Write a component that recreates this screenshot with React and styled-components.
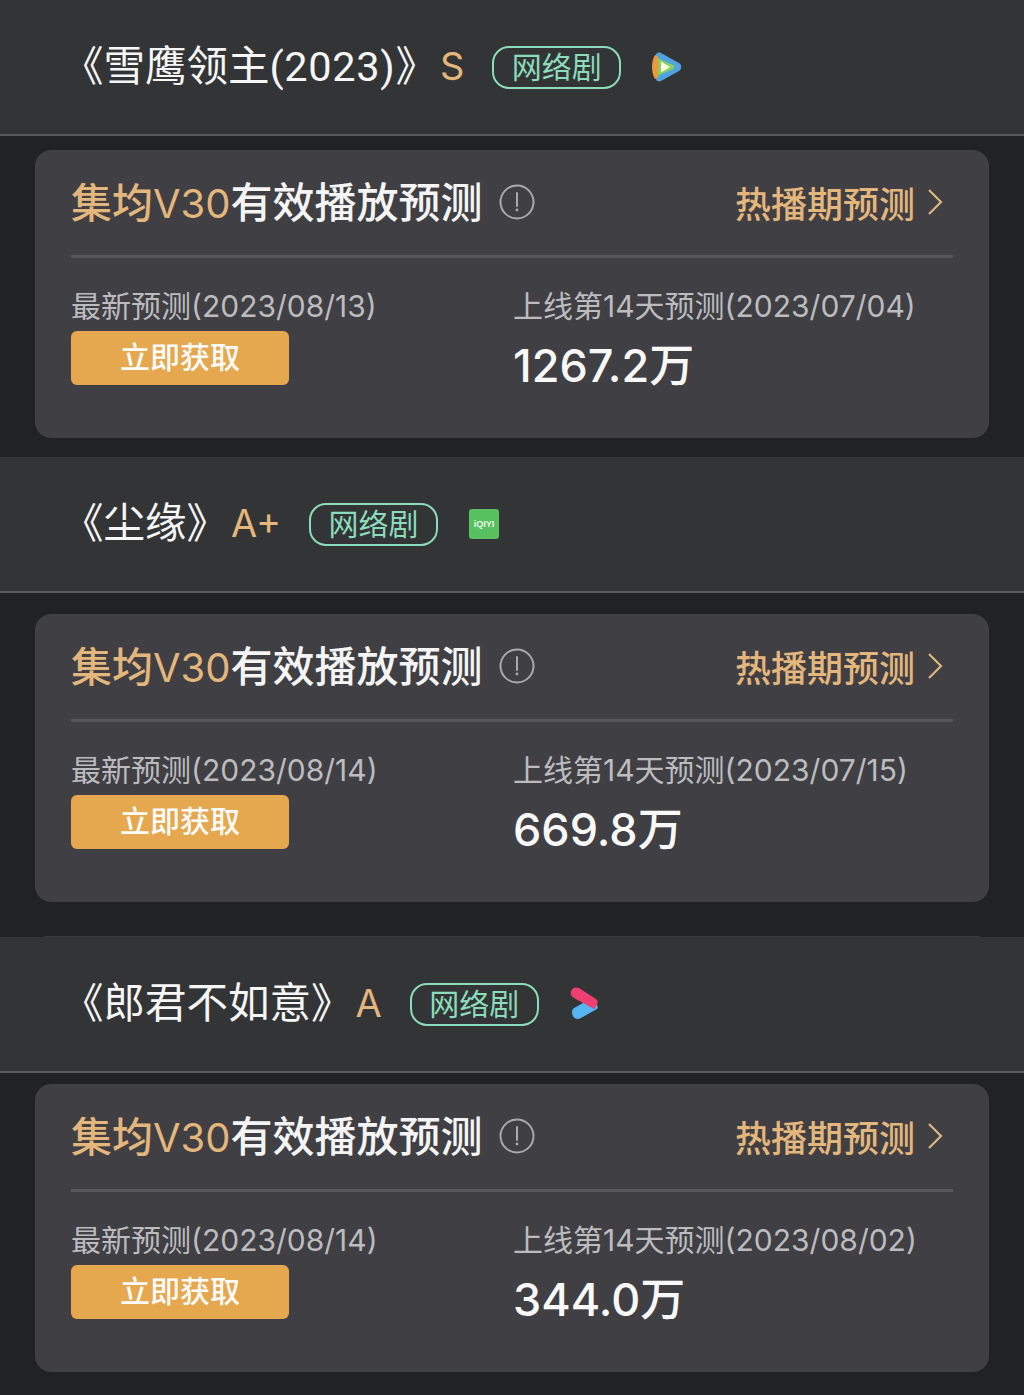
import React from "react";
import styled, { createGlobalStyle } from "styled-components";

const Global = createGlobalStyle`
  html, body { margin: 0; padding: 0; background: #212225; }
  body { font-family: "Inter", "Noto Sans CJK SC", sans-serif; }
`;

const Page = styled.div`
  width: 1024px;
  height: 1395px;
  overflow: hidden;
  background: #212225;
  display: flex;
  flex-direction: column;
`;

const Header = styled.header`
  height: 134px;
  box-sizing: content-box;
  background: #333436;
  border-bottom: 2px solid #58595c;
  display: flex;
  align-items: center;
  padding-left: 62px;
  flex: none;
`;

const Title = styled.h2`
  margin: 0;
  font: 400 41.5px/1 "Roboto", "Noto Sans CJK SC", sans-serif;
  color: #f6f6f6;
  white-space: nowrap;
`;

const TitleYear = styled.span`
  letter-spacing: 0.65px;
`;

const Grade = styled.span`
  margin-left: 3px;
  padding-bottom: 3px;
  font: 400 38px/1 "Inter", sans-serif;
  color: #e3b67c;
`;

const Tag = styled.span`
  margin-left: 28px;
  width: 129px;
  height: 43px;
  box-sizing: border-box;
  border: 2px solid #8adcba;
  border-radius: 17px;
  padding-bottom: 4px;
  display: flex;
  align-items: center;
  justify-content: center;
  font: 400 30px/1 "Noto Sans CJK SC", sans-serif;
  color: #8adcba;
`;

const PlatformIcon = styled.span`
  margin-left: ${(p) => p.$gap}px;
  display: flex;
`;

const Card = styled.section`
  margin: ${(p) => p.$top}px 35px 0;
  height: 288px;
  flex: none;
  box-sizing: border-box;
  background: #3f3f44;
  border-radius: 16px;
  padding: 0 36px;
  display: flex;
  flex-direction: column;
`;

const CardHead = styled.div`
  height: 108px;
  flex: none;
  border-bottom: 3px solid #57575c;
  display: flex;
  align-items: center;
  padding-bottom: 2px;
  box-sizing: border-box;
`;

const CardTitle = styled.h3`
  margin: 0;
  font: 500 42px/1 "Noto Sans CJK SC", sans-serif;
  color: #f4f4f4;
  white-space: nowrap;
`;

const Gold = styled.span`
  color: #e3b67c;
  font-size: 41px;
  font-weight: 500;
`;

const Latin = styled.span`
  font-family: "Inter", sans-serif;
  font-weight: 400;
  font-size: 40px;
`;

const Info = styled.span`
  margin-left: 16px;
  display: flex;
`;

const HotLink = styled.a`
  margin-left: auto;
  padding-right: 10px;
  display: flex;
  align-items: center;
  gap: 12px;
  font: 500 36px/1 "Noto Sans CJK SC", sans-serif;
  color: #e3b67c;
  white-space: nowrap;
`;

const Body = styled.div`
  display: grid;
  grid-template-columns: 442px 1fr;
  padding-top: 31px;
`;

const Column = styled.div`
  display: flex;
  flex-direction: column;
  align-items: flex-start;
`;

const Label = styled.div`
  font: 400 30px/34px "Inter", "Noto Sans CJK SC", sans-serif;
  color: #bcbcbf;
  white-space: nowrap;
`;

const GetButton = styled.button`
  margin-top: 8px;
  width: 218px;
  height: 54px;
  padding: 0 0 7px;
  border: 0;
  border-radius: 6px;
  background: #e6a84e;
  color: #fbfbfb;
  font: 500 30px/1 "Noto Sans CJK SC", sans-serif;
`;

const Value = styled.div`
  margin-top: 18px;
  font: 500 45px/1.1 "Inter", "Noto Sans CJK SC", sans-serif;
  color: #f8f8f8;
`;

const InfoIcon = () => (
  <svg width="36" height="36" viewBox="0 0 36 36" fill="none">
    <circle cx="18" cy="18" r="16.5" stroke="#a9a9ad" strokeWidth="2" />
    <path d="M18 9v13" stroke="#a9a9ad" strokeWidth="2" strokeLinecap="round" />
    <circle cx="18" cy="26" r="1.4" fill="#a9a9ad" />
  </svg>
);

const Chevron = () => (
  <svg width="16" height="28" viewBox="0 0 16 28" fill="none">
    <path d="M2 2l12 12L2 26" stroke="#dfb680" strokeWidth="2.2" />
  </svg>
);

const TencentIcon = () => (
  <svg width="33" height="30" viewBox="0 0 33 30">
    <path d="M7 2c1-1 3-2 5-1l18 10c3 2 3 6 0 8L12 29c-2 1-4 0-5-1 3-8 3-18 0-26z" fill="#4ea4e0" />
    <path d="M6 3C2 9 2 21 6 27c2 0 3-1 3-2 2-6 2-14 0-20 0-1-1-2-3-2z" fill="#ea9a3d" />
    <path d="M8 6l16 7c2 1 2 3 0 4L8 24c2-6 2-12 0-18z" fill="#8ed15a" />
    <path d="M12 9.500l9 5.500-9 5.500z" fill="#f7fae8" />
  </svg>
);

const IqiyiLogo = styled.span`
  width: 30px;
  height: 30px;
  border-radius: 3px;
  background: #57c15f;
  color: #e8f8e8;
  font: 700 9px/30px "Liberation Sans", sans-serif;
  text-align: center;
  letter-spacing: 0;
`;

const YoukuIcon = () => (
  <svg width="30" height="34" viewBox="0 0 30 34">
    <path d="M3 25c0-3 2-4 4-5l12-7 9 5c1 1 1 3 0 4L12 31c-5 3-9-1-9-6z" fill="#55b5f2" />
    <path d="M2 4C4 0 7 0 10 1l17 11c2 1 2 4 1 6l-3 4L5 11C2 9 1 7 2 4z" fill="#ee3f72" />
  </svg>
);

const items = [
  {
    id: "xueying",
    name: <>《雪鹰领主<TitleYear>(2023)</TitleYear>》</>, grade: "S", icon: <TencentIcon />, gap: 28, top: 14,
    latest: "2023/08/13", online: "2023/07/04", value: "1267.2万", after: 19,
  },
  {
    id: "chenyuan",
    name: "《尘缘》", grade: "A+", icon: <IqiyiLogo>iQIYI</IqiyiLogo>, gap: 31, top: 21,
    latest: "2023/08/14", online: "2023/07/15", value: "669.8万", after: 34, sliver: true,
  },
  {
    id: "langjun",
    name: "《郎君不如意》", grade: "A", icon: <YoukuIcon />, gap: 30, top: 11,
    latest: "2023/08/14", online: "2023/08/02", value: "344.0万", after: 0,
  },
];

const Spacer = styled.div`
  height: ${(p) => p.$h}px;
  flex: none;
`;

const Sliver = styled.div`
  height: 1px;
  margin: 0 44px;
  flex: none;
  background: #38383c;
`;

export default function App() {
  return (
    <Page>
      <Global />
      {items.map((it) => (
        <React.Fragment key={it.id}>
          <Header>
            <Title>{it.name}</Title>
            <Grade>{it.grade}</Grade>
            <Tag>网络剧</Tag>
            <PlatformIcon $gap={it.gap}>{it.icon}</PlatformIcon>
          </Header>
          <Card $top={it.top}>
            <CardHead>
              <CardTitle>
                <Gold>集均<Latin>V30</Latin></Gold>有效播放预测
              </CardTitle>
              <Info><InfoIcon /></Info>
              <HotLink>热播期预测<Chevron /></HotLink>
            </CardHead>
            <Body>
              <Column>
                <Label>最新预测({it.latest})</Label>
                <GetButton>立即获取</GetButton>
              </Column>
              <Column>
                <Label>上线第14天预测({it.online})</Label>
                <Value>{it.value}</Value>
              </Column>
            </Body>
          </Card>
          <Spacer $h={it.after} />
          {it.sliver && <Sliver />}
        </React.Fragment>
      ))}
    </Page>
  );
}
